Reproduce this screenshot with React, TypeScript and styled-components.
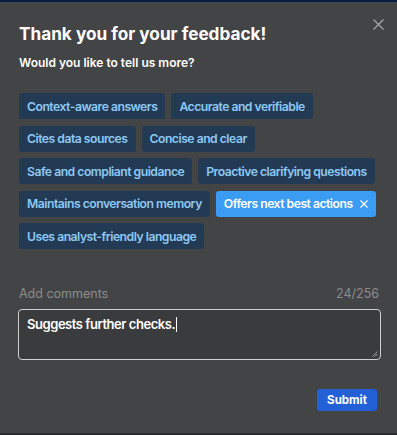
import React from "react";
import styled, { createGlobalStyle } from "styled-components";

const Global = createGlobalStyle`
  html, body { margin: 0; padding: 0; background: #434446; }
  body { font-family: Inter, "Noto Sans", sans-serif; }
  * { box-sizing: border-box; }
`;

const Panel = styled.div`
  width: 397px;
  height: 435px;
  background: #434446;
  border-top: 2px solid #0c1d45;
  border-bottom: 2px solid #2a2b2d;
  position: relative;
  padding: 20px 15px 0 19px;
  display: flex;
  flex-direction: column;
`;

const Close = styled.button`
  position: absolute;
  top: 16px;
  right: 13px;
  width: 12px;
  height: 12px;
  padding: 0;
  border: none;
  background: none;
  color: #a3a4a6;
  display: flex;
  align-items: center;
  justify-content: center;
`;

const Title = styled.h1`
  margin: 0;
  font-size: 17.2px;
  font-weight: 700;
  color: #ffffff;
  line-height: 23px;
`;

const Subtitle = styled.p`
  margin: 10px 0 0;
  font-size: 12px;
  font-weight: 600;
  color: #ffffff;
  line-height: 16px;
`;

const Chips = styled.div`
  margin-top: 22px;
  display: flex;
  flex-wrap: wrap;
  gap: 6.5px 6px;
`;

const Chip = styled.button<{ $selected?: boolean }>`
  height: 26px;
  padding: 0 8px;
  border: none;
  border-radius: 3px;
  font-family: Inter, "Noto Sans", sans-serif;
  font-size: 12.2px;
  font-weight: 600;
  letter-spacing: -0.5px;
  display: flex;
  align-items: center;
  gap: 7px;
  background: ${(p) => (p.$selected ? "#3a9cf2" : "#233a55")};
  color: ${(p) => (p.$selected ? "#ffffff" : "#8ec9f3")};
`;

const CommentHead = styled.div`
  margin-top: 37px;
  display: flex;
  justify-content: space-between;
  align-items: center;
  font-size: 12.5px;
  color: #8b8c8e;
  line-height: 16px;
  padding-right: 3px;
`;

const TextArea = styled.div`
  margin-top: 7px;
  height: 51px;
  margin-right: 1px;
  margin-left: -1px;
  border: 1px solid #d0d0d0;
  border-radius: 4px;
  background: #3a3b3d;
  padding: 5px 8px;
  font-size: 13px;
  font-weight: 600;
  letter-spacing: -0.45px;
  color: #ffffff;
  line-height: 18px;
  position: relative;
`;

const Caret = styled.span`
  display: inline-block;
  width: 1px;
  height: 15px;
  margin-left: 1px;
  background: #ffffff;
  vertical-align: -3px;
`;

const Grip = styled.svg`
  position: absolute;
  right: 2px;
  bottom: 2px;
`;

const Footer = styled.div`
  margin-top: 29px;
  display: flex;
  justify-content: flex-end;
  padding-right: 5px;
`;

const Submit = styled.button`
  height: 22px;
  width: 60px;
  padding: 0;
  border: none;
  border-radius: 3px;
  background: #2360d6;
  color: #ffffff;
  font-family: Inter, "Noto Sans", sans-serif;
  font-size: 11.5px;
  font-weight: 700;
`;

const options = [
  "Context-aware answers",
  "Accurate and verifiable",
  "Cites data sources",
  "Concise and clear",
  "Safe and compliant guidance",
  "Proactive clarifying questions",
  "Maintains conversation memory",
  "Offers next best actions",
  "Uses analyst-friendly language",
];

export default function App() {
  return (
    <>
      <Global />
      <Panel>
        <Close aria-label="Close">
          <svg width="11" height="11" viewBox="0 0 11 11">
            <path d="M0.5 0.5L10.5 10.5M10.5 0.5L0.5 10.5" stroke="currentColor" strokeWidth="1.3" />
          </svg>
        </Close>
        <Title>Thank you for your feedback!</Title>
        <Subtitle>Would you like to tell us more?</Subtitle>
        <Chips>
          {options.map((o) => {
            const sel = o === "Offers next best actions";
            return (
              <Chip key={o} $selected={sel}>
                {o}
                {sel && (
                  <svg width="8" height="8" viewBox="0 0 8 8">
                    <path d="M0.5 0.5L7.5 7.5M7.5 0.5L0.5 7.5" stroke="currentColor" strokeWidth="1.3" />
                  </svg>
                )}
              </Chip>
            );
          })}
        </Chips>
        <CommentHead>
          <span>Add comments</span>
          <span>24/256</span>
        </CommentHead>
        <TextArea>
          Suggests further checks.<Caret />
          <Grip width="6" height="6" viewBox="0 0 6 6">
            <path d="M0.5 5.5L5.5 0.5M3 5.5L5.5 3" stroke="#bbbbbb" strokeWidth="0.8" />
          </Grip>
        </TextArea>
        <Footer>
          <Submit>Submit</Submit>
        </Footer>
      </Panel>
    </>
  );
}
